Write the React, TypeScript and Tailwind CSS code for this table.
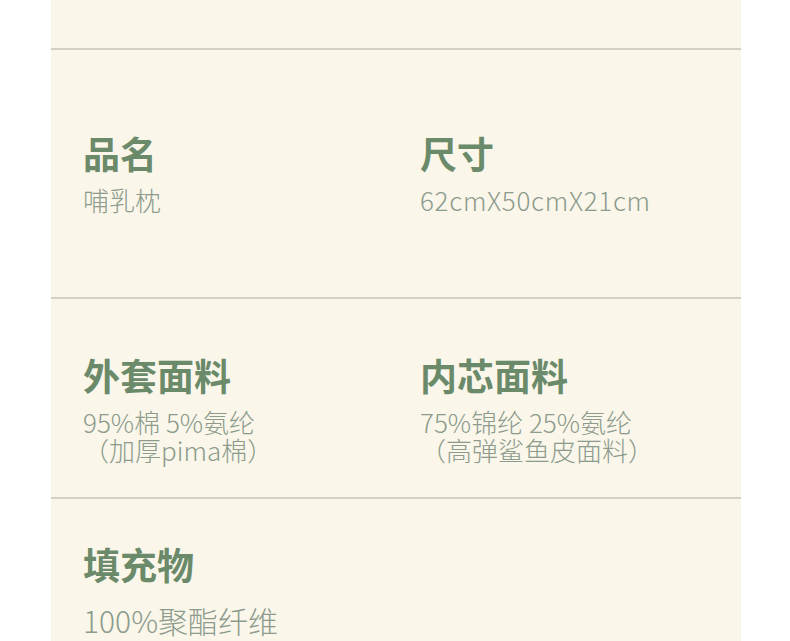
import React from "react";

type Spec = { title: string; lines: string[]; wide?: boolean };

const rows: { cells: Spec[]; className: string; sub?: string }[] = [
  {
    className: "h-[249px] pt-[81px]",
    cells: [
      { title: "品名", lines: ["哺乳枕"] },
      { title: "尺寸", lines: ["62cmX50cmX21cm"], wide: true },
    ],
  },
  {
    className: "h-[200px] pt-[54px]",
    cells: [
      { title: "外套面料", lines: ["95%棉 5%氨纶", "（加厚pima棉）"] },
      { title: "内芯面料", lines: ["75%锦纶 25%氨纶", "（高弹鲨鱼皮面料）"] },
    ],
  },
  {
    className: "h-[160px] pt-[43px]",
    sub: "mt-[20px] text-[30px]",
    cells: [{ title: "填充物", lines: ["100%聚酯纤维"] }],
  },
];

function Cell({ spec, sub }: { spec: Spec; sub?: string }) {
  return (
    <div>
      <div className="text-[37px] leading-[44px] font-bold text-[#6a8a6a]">
        {spec.title}
      </div>
      <div className={`${sub ?? "mt-[11px] text-[26px]"} leading-[28px] font-light text-[#8c9b8c]`}>
        {spec.lines.map((l) => (
          <div key={l} className={`whitespace-pre ${spec.wide ? "tracking-[0.7px]" : ""}`}>
            {l}
          </div>
        ))}
      </div>
    </div>
  );
}

export default function App() {
  return (
    <div
      className="w-[790px] h-[641px] overflow-hidden bg-white"
      style={{ fontFamily: '"Noto Sans CJK SC", "Noto Sans", sans-serif' }}
    >
      <div className="ml-[51px] w-[690px] h-full bg-[#faf6ea] flex flex-col">
        <div className="h-[50px] shrink-0 border-b-2 border-[#d4d0c6]" />
        {rows.map((r, i) => (
          <div
            key={i}
            className={`${r.className} shrink-0 grid grid-cols-[337px_1fr] pl-8 ${
              i < rows.length - 1 ? "border-b-2 border-[#d4d0c6]" : ""
            }`}
          >
            {r.cells.map((c) => (
              <Cell key={c.title} spec={c} sub={r.sub} />
            ))}
          </div>
        ))}
      </div>
    </div>
  );
}
